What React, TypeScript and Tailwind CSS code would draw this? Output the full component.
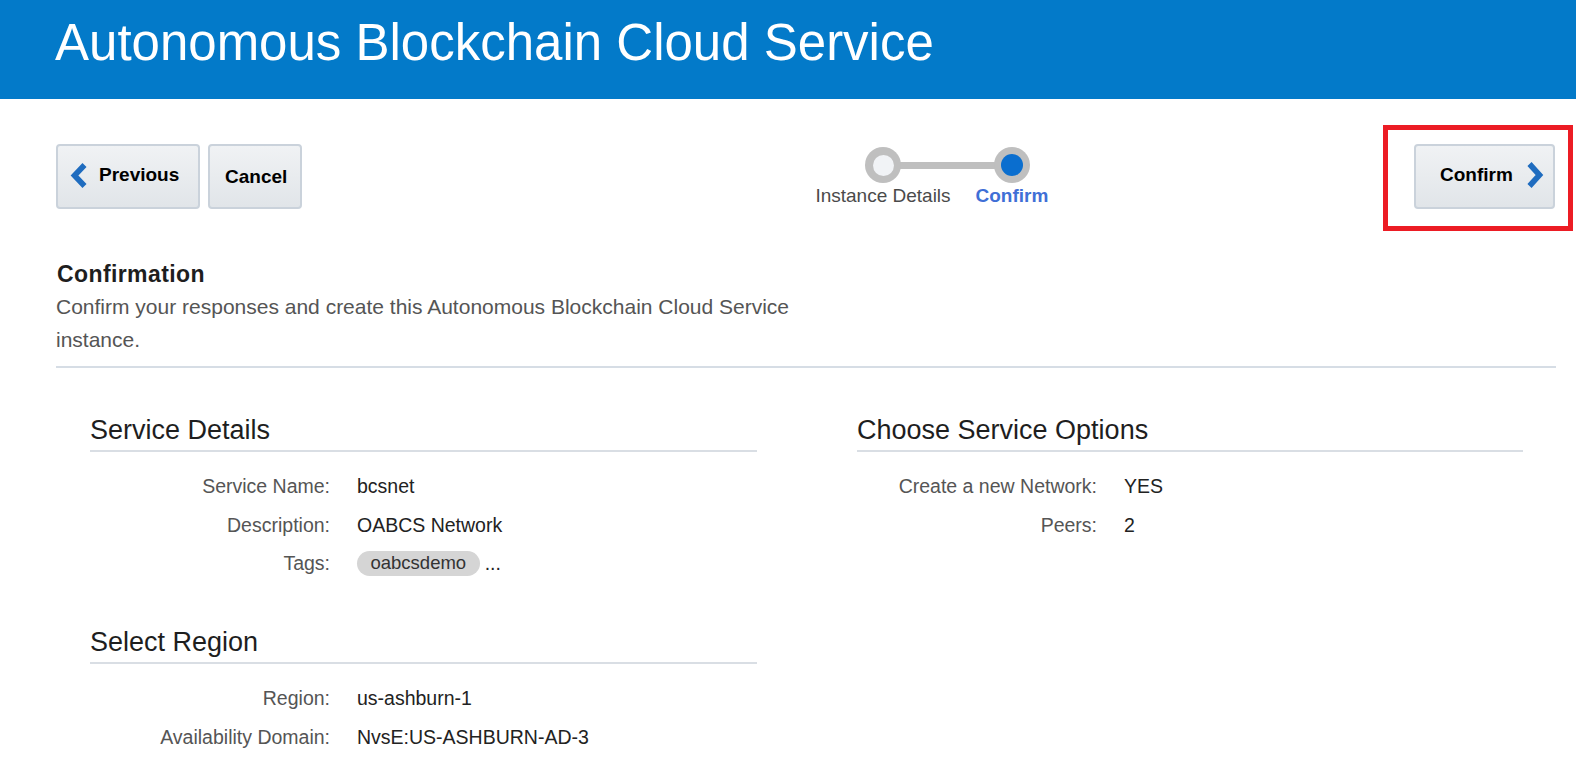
import React from "react";

function ChevronLeft() {
  return (
    <svg width="18" height="25" viewBox="0 0 18 25" className="shrink-0">
      <polyline points="14.5,2 4.5,12.5 14.5,23" fill="none" stroke="#1f6cbf" strokeWidth="5.6" strokeLinejoin="miter" />
    </svg>
  );
}

function ChevronRight() {
  return (
    <svg width="18" height="26" viewBox="0 0 18 26" className="shrink-0">
      <polyline points="3.5,2 13.5,13 3.5,24" fill="none" stroke="#1f6cbf" strokeWidth="5.6" strokeLinejoin="miter" />
    </svg>
  );
}

const btn =
  "flex h-[65px] items-center rounded-[4px] border-2 border-[#cad2db] bg-linear-to-b from-[#f0f2f4] to-[#e1e5e9] text-[19px] font-bold text-black";

type Row = { label: string; value: React.ReactNode };

function Section({ title, rows, className = "" }: { title: string; rows: Row[]; className?: string }) {
  return (
    <div className={className}>
      <h2 className="text-[27px] leading-[32px] text-[#1e1e1e]">{title}</h2>
      <div className="mt-[4px] h-[2px] bg-[#d9dee4]" />
      <div className="mt-[22px] flex flex-col gap-[14.5px]">
        {rows.map((r) => (
          <div key={r.label} className="flex h-[24px] items-center text-[19.5px] leading-[24px]">
            <div className="w-[240px] text-right text-[#555555]">{r.label}</div>
            <div className="ml-[27px] flex items-center text-[#222222]">{r.value}</div>
          </div>
        ))}
      </div>
    </div>
  );
}

export default function App() {
  return (
    <div className="h-[770px] w-[1576px] overflow-hidden bg-white font-['Liberation_Sans',Arial,sans-serif]">
      <header className="h-[99px] bg-[#037ac9] pl-[55px] pt-[17px]">
        <h1 className="text-[51px] leading-[51px] text-white">Autonomous Blockchain Cloud Service</h1>
      </header>

      <div className="mt-[45px] flex items-start pl-[56px] pr-[21px]">
        <div className="flex gap-[8px]">
          <button className={`${btn} w-[144px] pb-[3px] pl-[12px]`}>
            <ChevronLeft />
            <span className="ml-[11px]">Previous</span>
          </button>
          <button className={`${btn} w-[94px] pl-[15px] pt-[2px]`}>
            <span>Cancel</span>
          </button>
        </div>

        <div className="relative ml-[513px] mt-[3px] flex gap-[24.5px]">
          <div className="absolute left-[68px] top-[14.5px] h-[7px] w-[129px] bg-[#bfbfbf]" />
          <div className="relative flex w-[136px] flex-col items-center">
            <div className="flex h-[36px] w-[36px] items-center justify-center rounded-full bg-[#bfbfbf]">
              <div className="h-[21px] w-[21px] rounded-full bg-[#f1f3f6]" />
            </div>
            <span className="mt-[2px] whitespace-nowrap text-[19px] leading-[22px] text-[#4a4a4a]">Instance Details</span>
          </div>
          <div className="relative flex flex-col items-center">
            <div className="flex h-[36px] w-[36px] items-center justify-center rounded-full bg-[#bfbfbf]">
              <div className="h-[22px] w-[22px] rounded-full bg-[#0a6ecf]" />
            </div>
            <span className="mt-[2px] whitespace-nowrap text-[19px] font-bold leading-[22px] text-[#3f6fd6]">Confirm</span>
          </div>
        </div>

        <div className="relative ml-auto">
          <button className={`${btn} w-[141px] pb-[3px] pl-[24px]`}>
            <span>Confirm</span>
            <span className="ml-[13px]">
              <ChevronRight />
            </span>
          </button>
          <div className="pointer-events-none absolute -bottom-[22px] -left-[31px] -right-[18px] -top-[19px] border-[5px] border-[#ec1c24]" />
        </div>
      </div>

      <div className="pl-[56px] pr-[20px]">
        <h2 className="ml-[1px] mt-[51px] text-[23px] font-bold leading-[28px] tracking-[0.4px] text-[#1e1e1e]">Confirmation</h2>
        <p className="mt-[2px] max-w-[760px] text-[21px] leading-[33px] text-[#555555]">
          Confirm your responses and create this Autonomous Blockchain Cloud Service instance.
        </p>
        <div className="mt-[10px] h-[2px] bg-[#d6dde5]" />

        <div className="ml-[34px] mt-[46px] flex gap-[100px]">
          <div className="w-[667px]">
            <Section
              title="Service Details"
              rows={[
                { label: "Service Name:", value: "bcsnet" },
                { label: "Description:", value: "OABCS Network" },
                {
                  label: "Tags:",
                  value: (
                    <>
                      <span className="flex h-[25px] items-center rounded-full bg-[#d5d5d5] px-[13.5px] text-[18.5px] text-[#333333]">
                        oabcsdemo
                      </span>
                      <span className="ml-[5px]">...</span>
                    </>
                  ),
                },
              ]}
            />
            <Section
              className="mt-[51px]"
              title="Select Region"
              rows={[
                { label: "Region:", value: "us-ashburn-1" },
                { label: "Availability Domain:", value: "NvsE:US-ASHBURN-AD-3" },
              ]}
            />
          </div>
          <div className="w-[666px]">
            <Section
              title="Choose Service Options"
              rows={[
                { label: "Create a new Network:", value: "YES" },
                { label: "Peers:", value: "2" },
              ]}
            />
          </div>
        </div>
      </div>
    </div>
  );
}
